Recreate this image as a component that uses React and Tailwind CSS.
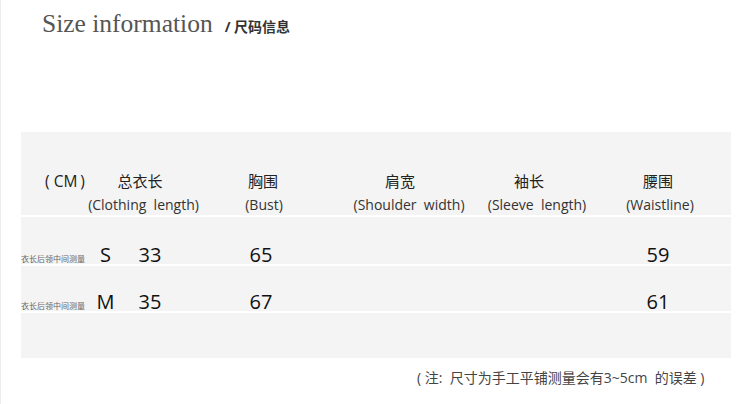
const sans = "font-['Open_Sans','Noto_Sans_CJK_SC',sans-serif]";

const columns = [
    { zh: "总衣长", en: "(Clothing  length)", zhShift: "mr-[4px]", enShift: "pl-[3px]" },
    { zh: "胸围", en: "(Bust)", zhShift: "", enShift: "pl-[2px]" },
    { zh: "肩宽", en: "(Shoulder  width)", zhShift: "mr-[8px]", enShift: "pl-[10px]" },
    { zh: "袖长", en: "(Sleeve  length)", zhShift: "mr-[8px]", enShift: "pl-[8px]" },
    { zh: "腰围", en: "(Waistline)", zhShift: "mr-[2px]", enShift: "pl-[2px]" },
];

const widths = ["w-[78px]", "w-[164px]", "w-[118px]", "w-[140px]", "w-[112px]"];

const sizes = [
    { size: "S", length: "33", bust: "65", waist: "59", h: "h-[47px] pt-[28px]" },
    { size: "M", length: "35", bust: "67", waist: "61", h: "h-[45px] pt-[26px]" },
];

function HeaderRow() {
    return (
        <div className="flex h-[83px] pt-[39px] bg-[#f4f4f4]">
            <div className="w-[82px] flex justify-center">
                <span className="text-[15.5px] leading-[20px] text-[#222] pl-[6px] whitespace-nowrap">
                    (<span className="ml-[4px]">CM</span><span className="ml-[3px]">)</span>
                </span>
            </div>
            {columns.map((c, i) => (
                <div key={c.zh} className={`${widths[i]} flex flex-col items-center`}>
                    <span className={`text-[15px] leading-[20px] text-[#222] whitespace-nowrap ${c.zhShift}`}>{c.zh}</span>
                    <span className={`mt-[5px] text-[14px] leading-[18px] text-[#333] whitespace-pre ${c.enShift}`}>{c.en}</span>
                </div>
            ))}
        </div>
    );
}

function SizeRow({ row }) {
    return (
        <div className={`flex items-start bg-[#f4f4f4] mt-[2px] ${row.h}`}>
            <span className="w-[77px] mt-[10px] text-[8px] leading-none text-[#666] whitespace-nowrap">衣长后领中间测量</span>
            <span className="w-[15px] flex justify-center text-[20px] leading-none text-[#111]">{row.size}</span>
            <span className="w-[74px] flex justify-center text-[20px] leading-none text-[#111]">{row.length}</span>
            <span className="w-[148px] flex justify-center text-[20px] leading-none text-[#111]">{row.bust}</span>
            <span className="w-[270px]"></span>
            <span className="w-[106px] flex justify-center text-[20px] leading-none text-[#111]">{row.waist}</span>
        </div>
    );
}

export default function App() {
    return (
        <div className={`w-[750px] h-[404px] bg-white overflow-hidden border-l border-[#ececec] ${sans}`}>
            <div className="h-[132px] pt-[11px] pl-[41px] flex items-baseline">
                <span className="font-['Liberation_Serif',serif] text-[25.5px] leading-none text-[#555]">Size information</span>
                <span className="ml-[12px] text-[14px] leading-none font-bold text-[#333]">/ 尺码信息</span>
            </div>

            <div className="ml-[20px] w-[710px]">
                <HeaderRow />
                {sizes.map((row) => (
                    <SizeRow key={row.size} row={row} />
                ))}
                <div className="h-[45px] mt-[2px] bg-[#f4f4f4]"></div>
            </div>

            <div className="pl-[416px] mt-[10px] text-[14px] leading-[20px] text-[#444] whitespace-pre">
                ( 注:  尺寸为手工平铺测量会有3~5cm  的误差 )
            </div>
        </div>
    );
}
